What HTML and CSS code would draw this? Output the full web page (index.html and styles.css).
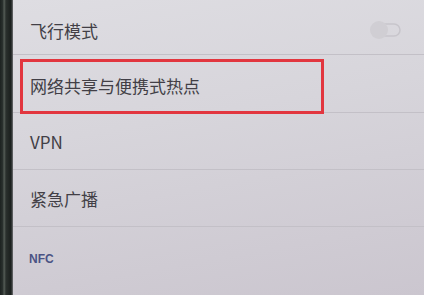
FILE: index.html
```html
<html>
 <head>
  <meta charset='utf-8'>
  <title>设置</title>
  <link rel="stylesheet" href="styles.css">
 </head>
 <body>
  <div class='bezel'></div>
  <div class='screen'>
   <div class='row first'>
    <span>飞行模式</span>
    <svg class='toggle' width='36' height='24' viewBox='0 0 36 24'>
     <rect x='9' y='6' width='25' height='12' rx='6' fill='none' stroke='#c6c4ca' stroke-width='1.5'/>
     <circle cx='13' cy='12' r='9' fill='#d0ced3'/>
    </svg>
   </div>
   <div class='row hot'>
    <span>网络共享与便携式热点</span>
    <div class='mark'></div>
   </div>
   <div class='row'><span>VPN</span></div>
   <div class='row'><span>紧急广播</span></div>
   <p class='head'>NFC</p>
  </div>
 </body>
</html>
```
FILE: styles.css
```css
* {box-sizing:border-box}
body {margin:0; width:424px; height:295px; display:flex; overflow:hidden; font-family:"Noto Sans CJK SC","Noto Sans",sans-serif; color:#423f46}
.bezel {width:13px; background:linear-gradient(90deg,#1c2220 0,#2c3330 3px,#58605a 4px,#2a302d 6px,#1a1f1d 11px,#6e6f72 13px)}
.screen {flex:1; display:flex; flex-direction:column; background:linear-gradient(170deg,#dedde2 0,#d7d5db 40%,#cbc6cf 100%)}
.row {position:relative; display:flex; align-items:center; justify-content:space-between; padding:0 22px 0 17px; height:57px; font-size:17px; border-bottom:1px solid #c3c0c7}
.row.first {height:55px; padding-top:6px}
.row.hot {height:58px; padding-top:4px}
.toggle {opacity:.9}
.mark {position:absolute; left:7px; top:4px; width:304px; height:55px; border:3px solid #e2363f}
.head {margin:0; padding:25px 0 0 16px; font-size:12px; font-weight:bold; color:#4b5384; font-family:"Liberation Sans",sans-serif}
```
